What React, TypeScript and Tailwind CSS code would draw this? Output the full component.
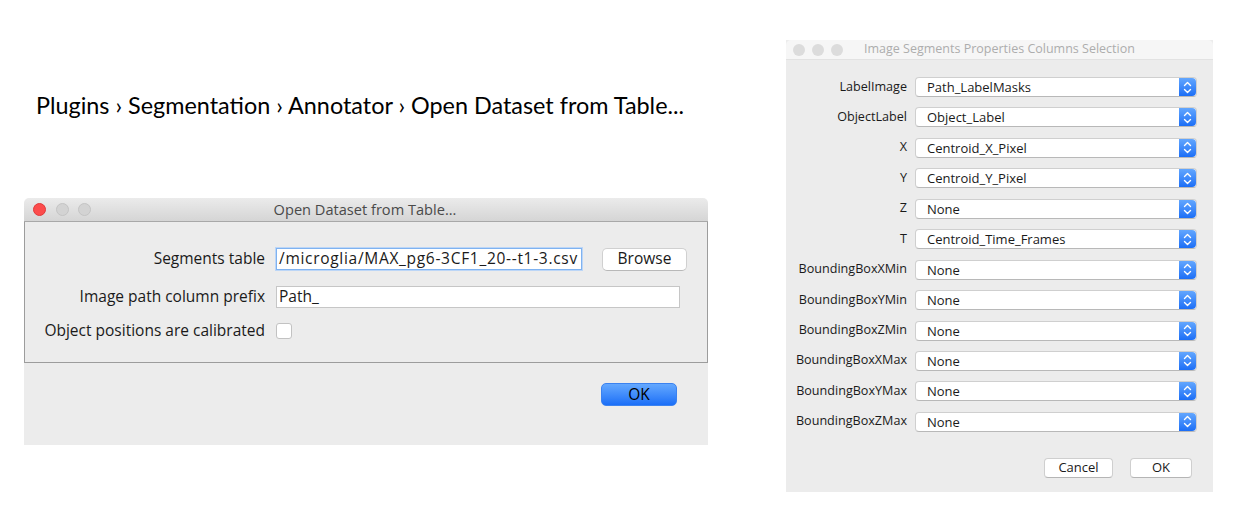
import React from 'react';

const ui = { fontFamily: '"Open Sans", "DejaVu Sans", sans-serif' };

const Lights = ({ active }: { active: boolean }) => (
  <div className={`flex items-center ${active ? 'gap-[9.5px]' : 'gap-[7px]'}`}>
    {[0, 1, 2].map((i) => (
      <span
        key={i}
        className={`block rounded-full ${
          active
            ? i === 0
              ? 'w-[13px] h-[13px] bg-[#fc4c4c] border border-[#e0393a]'
              : 'w-[13px] h-[13px] bg-[#d3d3d3] border border-[#c4c4c4]'
            : 'w-[12px] h-[12px] bg-[#dcdcdc]'
        }`}
      />
    ))}
  </div>
);

const Stepper = () => (
  <div className="w-[17px] h-full rounded-r-[4px] bg-gradient-to-b from-[#62a6fe] to-[#1b6ef6] flex items-center justify-center">
    <svg width="9" height="13" viewBox="0 0 9 13" fill="none" stroke="white" strokeWidth="1.4" strokeLinecap="round" strokeLinejoin="round">
      <path d="M1.5 4.5 L4.5 1.5 L7.5 4.5" />
      <path d="M1.5 8.5 L4.5 11.5 L7.5 8.5" />
    </svg>
  </div>
);

const Select = ({ value }: { value: string }) => (
  <div className="w-[282px] h-[20px] flex bg-white rounded-[4px] border border-[#cfcfcf] border-b-[#b8b8b8]">
    <div className="flex-1 pl-[11px] text-[13px] leading-[18px] text-[#1a1a1a]">{value}</div>
    <Stepper />
  </div>
);

const rows: [string, string][] = [
  ['LabelImage', 'Path_LabelMasks'],
  ['ObjectLabel', 'Object_Label'],
  ['X', 'Centroid_X_Pixel'],
  ['Y', 'Centroid_Y_Pixel'],
  ['Z', 'None'],
  ['T', 'Centroid_Time_Frames'],
  ['BoundingBoxXMin', 'None'],
  ['BoundingBoxYMin', 'None'],
  ['BoundingBoxZMin', 'None'],
  ['BoundingBoxXMax', 'None'],
  ['BoundingBoxYMax', 'None'],
  ['BoundingBoxZMax', 'None'],
];

const Button = ({ label, w }: { label: string; w: string }) => (
  <div className={`${w} h-[20px] bg-white rounded-[4px] border border-[#cfcfcf] border-b-[#b5b5b5] flex items-center justify-center text-[13px] text-[#1a1a1a]`}>
    {label}
  </div>
);

export default function App() {
  return (
    <div className="w-[1245px] h-[518px] bg-white flex" style={ui}>
      {/* left column */}
      <div className="ml-[24px] w-[684px] flex flex-col">
        <div
          className="mt-[89px] pl-[12px] text-[23.4px] leading-[32px] text-black"
          style={{ fontFamily: 'Lato, "Open Sans", sans-serif' }}
        >
          Plugins › Segmentation › Annotator › Open Dataset from Table...
        </div>

        <div className="mt-[77px] w-[684px] flex flex-col">
          <div className="h-[24px] rounded-t-[5px] bg-gradient-to-b from-[#ebebeb] to-[#d5d5d5] border-b border-[#a8a8a8] flex items-center px-[9px] relative">
            <Lights active />
            <div className="absolute inset-0 flex items-center justify-center text-[14.6px] text-[#4a4a4a] pr-[2px]">
              Open Dataset from Table...
            </div>
          </div>

          <div className="h-[141px] bg-[#ececec] border-x border-b border-[#9c9c9c] flex flex-col pt-[26px]">
            <div className="flex items-center h-[22px]">
              <div className="w-[240px] text-right text-[15.5px] text-[#1a1a1a]">Segments table</div>
              <div className="ml-[11px] w-[306px] h-[22px] bg-white border border-[#7fb2f0] shadow-[0_0_0_1px_#bcd6f7] flex items-center pl-[2px] text-[15.5px] tracking-[0.7px] text-[#1a1a1a] whitespace-nowrap overflow-hidden">
                /microglia/MAX_pg6-3CF1_20--t1-3.csv
              </div>
              <div className="ml-[20px] w-[85px] h-[23px] bg-white rounded-[5px] border border-[#d0d0d0] border-b-[#b8b8b8] flex items-center justify-center text-[15.5px] text-[#1a1a1a]">
                Browse
              </div>
            </div>
            <div className="flex items-center h-[22px] mt-[16px]">
              <div className="w-[240px] text-right text-[15.5px] text-[#1a1a1a]">Image path column prefix</div>
              <div className="ml-[11px] w-[404px] h-[22px] bg-white border border-[#c6c6c6] flex items-center pl-[2px] text-[15.5px] text-[#1a1a1a]">
                Path_
              </div>
            </div>
            <div className="flex items-center h-[22px] mt-[12px]">
              <div className="w-[240px] text-right text-[15.5px] text-[#1a1a1a]">Object positions are calibrated</div>
              <div className="ml-[11px] w-[16px] h-[16px] bg-white rounded-[3px] border border-[#c2c2c2]" />
            </div>
          </div>

          <div className="h-[82px] bg-[#ececec] flex justify-end pr-[31px] pt-[20px]">
            <div className="w-[76px] h-[23px] rounded-[5px] bg-gradient-to-b from-[#64a8fe] to-[#1a6ef7] border border-[#3b82f0] flex items-center justify-center text-[15.5px] text-black">
              OK
            </div>
          </div>
        </div>
      </div>

      {/* right dialog */}
      <div className="ml-[78px] mt-[40px] w-[427px] h-[452px] flex flex-col bg-[#ececec]">
        <div className="h-[20px] bg-[#f6f6f6] rounded-t-[5px] border-b border-[#e2e2e2] flex items-center px-[7px] relative">
          <Lights active={false} />
          <div className="absolute left-[78px] top-0 bottom-0 flex items-center text-[12.5px] text-[#adadad]">
            Image Segments Properties Columns Selection
          </div>
        </div>
        <div className="flex flex-col pt-[17px] gap-[10.45px]">
          {rows.map(([label, value]) => (
            <div key={label} className="flex items-center h-[20px]">
              <div className="w-[121px] text-right text-[12.6px] text-[#1a1a1a]">{label}</div>
              <div className="ml-[8px]">
                <Select value={value} />
              </div>
            </div>
          ))}
        </div>
        <div className="flex justify-end gap-[17px] pr-[21px] mt-[26px]">
          <Button label="Cancel" w="w-[69px]" />
          <Button label="OK" w="w-[62px]" />
        </div>
      </div>
    </div>
  );
}
